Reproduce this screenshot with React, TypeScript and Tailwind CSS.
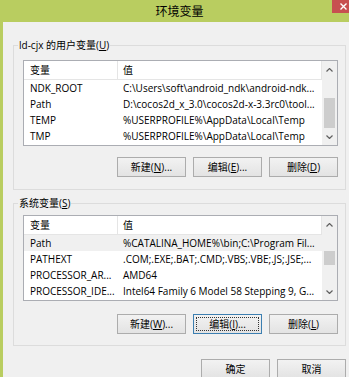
import type { ReactNode } from 'react';

type Row = [string, string];

const userVars: Row[] = [
  ['NDK_ROOT', 'C:\\Users\\soft\\android_ndk\\android-ndk...'],
  ['Path', 'D:\\cocos2d_x_3.0\\cocos2d-x-3.3rc0\\tool...'],
  ['TEMP', '%USERPROFILE%\\AppData\\Local\\Temp'],
  ['TMP', '%USERPROFILE%\\AppData\\Local\\Temp'],
];

const systemVars: Row[] = [
  ['Path', '%CATALINA_HOME%\\bin;C:\\Program Fil...'],
  ['PATHEXT', '.COM;.EXE;.BAT;.CMD;.VBS;.VBE;.JS;.JSE;...'],
  ['PROCESSOR_AR...', 'AMD64'],
  ['PROCESSOR_IDE...', 'Intel64 Family 6 Model 58 Stepping 9, G...'],
];

function Key({ k }: { k: string }) {
  return <span className="underline underline-offset-[1px]">{k}</span>;
}

function Chevron({ down }: { down?: boolean }) {
  return (
    <svg width="7" height="4" viewBox="0 0 7 4" className={down ? 'rotate-180' : ''}>
      <path d="M0.5 3.5 L3.5 0.5 L6.5 3.5" fill="none" stroke="#606060" strokeWidth="1.2" />
    </svg>
  );
}

function Button({ children, focused }: { children: ReactNode; focused?: boolean }) {
  return (
    <div
      className={`w-[69px] h-[20px] flex border bg-linear-to-b from-[#f2f2f2] to-[#e3e3e3] ${
        focused ? 'border-[#3c7fb1] p-[2px]' : 'border-[#acacac]'
      }`}
    >
      <div
        className={`flex-1 flex items-center justify-center leading-none ${
          focused ? 'border border-dotted border-[#333]' : ''
        }`}
      >
        {children}
      </div>
    </div>
  );
}

function VarList({ rows, selected, thumb }: { rows: Row[]; selected?: number; thumb: string }) {
  return (
    <div className="w-[315px] h-[86px] border border-[#abadb3] bg-white flex overflow-hidden">
      <div className="w-[298px] flex flex-col">
        <div className="h-[19px] flex border-b border-r border-[#e5e5e5] leading-[18px]">
          <div className="w-[94px] pl-[6px] border-r border-[#e5e5e5]">变量</div>
          <div className="flex-1 pl-[5px]">值</div>
        </div>
        {rows.map(([name, value], i) => (
          <div
            key={i}
            className={`h-[16px] flex leading-[16px] whitespace-nowrap ${i === selected ? 'bg-[#f0f0f0]' : ''}`}
          >
            <div className="w-[94px] pl-[6px] overflow-hidden">{name}</div>
            <div className="flex-1 pl-[5px] overflow-hidden">{value}</div>
          </div>
        ))}
      </div>
      <div className="w-[15px] bg-[#f0f0f0] flex flex-col">
        <div className="h-[17px] flex items-center justify-center">
          <Chevron />
        </div>
        <div className="flex-1 px-[2px] flex flex-col">
          <div className={`bg-[#cdcdcd] ${thumb}`} />
        </div>
        <div className="h-[17px] flex items-center justify-center">
          <Chevron down />
        </div>
      </div>
    </div>
  );
}

function GroupBox({ label, height, padTop, children }: { label: ReactNode; height: string; padTop: string; children: ReactNode }) {
  return (
    <div className={`relative w-[333px] border border-[#dcdcdc] pl-[9px] ${height} ${padTop}`}>
      <div className="absolute -top-[8px] left-[4px] px-[1px] bg-[#f0f0f0] leading-[14px]">{label}</div>
      {children}
    </div>
  );
}

export default function App() {
  return (
    <div className="w-[349px] h-[377px] overflow-hidden bg-[#b9cd60] flex flex-col text-[10px] text-black font-['Open_Sans','Noto_Sans_CJK_SC',sans-serif]">
      <div className="h-[22px] shrink-0 flex items-start">
        <div className="flex-1" />
        <div className="pl-[10px] text-[12px] leading-[21px] font-['Noto_Sans_CJK_SC',sans-serif]">环境变量</div>
        <div className="flex-1 flex justify-end">
          <div className="w-[17px] h-[13px] bg-[#c75050] flex items-center justify-end pr-[2px]">
            <svg width="7" height="7" viewBox="0 0 7 7">
              <path d="M0.5 0.5 L6.5 6.5 M6.5 0.5 L0.5 6.5" stroke="#fff" strokeWidth="1.4" />
            </svg>
          </div>
        </div>
      </div>

      <div className="flex-1 ml-[3px] bg-[#f0f0f0] pt-[23px] pl-[10px] flex flex-col">
        <GroupBox
          height="h-[145px]"
          padTop="pt-[14px]"
          label={
            <>
              ld-cjx 的用户变量(<Key k="U" />)
            </>
          }
        >
          <VarList rows={userVars} thumb="mt-auto h-[30px]" />
          <div className="w-[315px] mt-[11px] flex justify-end gap-[7px]">
            <Button>
              新建(<Key k="N" />)...
            </Button>
            <Button>
              编辑(<Key k="E" />)...
            </Button>
            <Button>
              删除(<Key k="D" />)
            </Button>
          </div>
        </GroupBox>

        <div className="mt-[13px]">
          <GroupBox
            height="h-[143px]"
            padTop="pt-[11px]"
            label={
              <>
                系统变量(<Key k="S" />)
              </>
            }
          >
            <VarList rows={systemVars} selected={0} thumb="mt-[18px] h-[14px]" />
            <div className="w-[315px] mt-[13px] flex justify-end gap-[7px]">
              <Button>
                新建(<Key k="W" />)...
              </Button>
              <Button focused>
                编辑(<Key k="I" />)...
              </Button>
              <Button>
                删除(<Key k="L" />)
              </Button>
            </div>
          </GroupBox>
        </div>

        <div className="w-[333px] mt-[13px] flex justify-end gap-[7px]">
          <Button>确定</Button>
          <Button>取消</Button>
        </div>
      </div>
    </div>
  );
}
